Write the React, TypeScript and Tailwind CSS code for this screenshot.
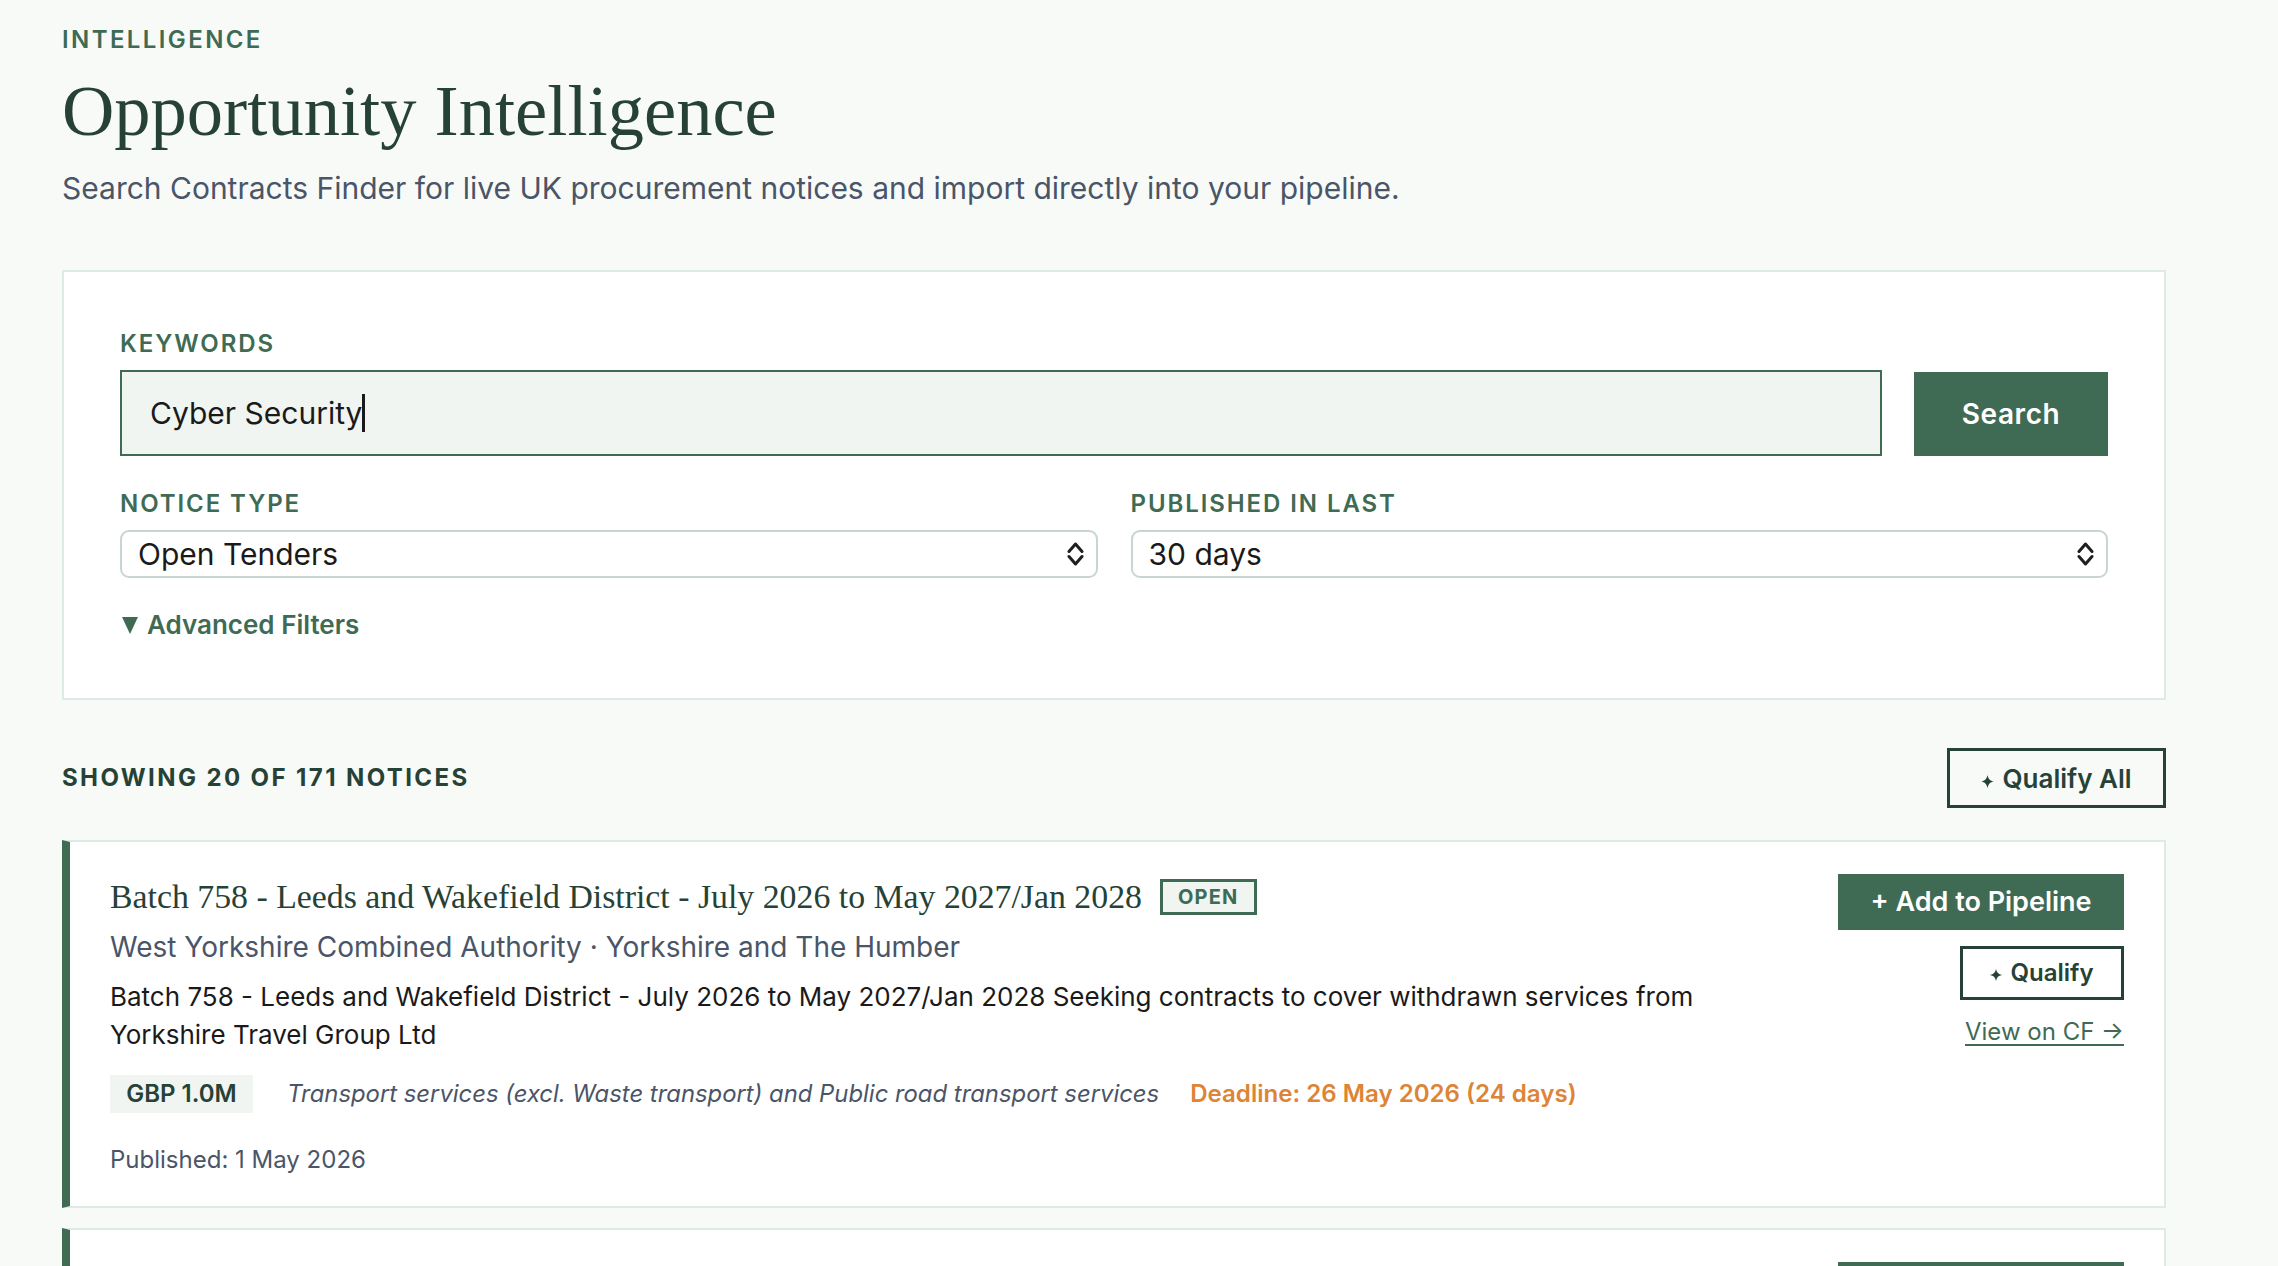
const serif = "font-['Liberation_Serif',serif]"

const Label = ({ children }: { children: string }) => (
  <div className="text-[24px] leading-[28px] font-semibold tracking-[0.08em] text-[#3f6b54]">{children}</div>
)

const Chevrons = () => (
  <svg width="17" height="24" viewBox="0 0 17 24" fill="none" stroke="#1f1f1f" strokeWidth="3" strokeLinecap="round" strokeLinejoin="round">
    <path d="M2 9.5 8.5 2 15 9.5" />
    <path d="M2 14.5 8.5 22 15 14.5" />
  </svg>
)

const Select = ({ value }: { value: string }) => (
  <div className="mt-[12px] h-[48px] rounded-[9px] border-2 border-[#c8d6cf] bg-white pl-[16px] pr-[12px] flex items-center justify-between">
    <span className="text-[30px] text-[#1a1a1a]">{value}</span>
    <Chevrons />
  </div>
)

const Sparkle = ({ size }: { size: number }) => (
  <svg width={size} height={size} viewBox="0 0 12 12" fill="#264237" className="inline-block mr-[8px] relative top-[1px]">
    <path d="M6 0C6.6 3.6 8.4 5.4 12 6 8.4 6.6 6.6 8.4 6 12 5.4 8.4 3.6 6.6 0 6 3.6 5.4 5.4 3.6 6 0Z" />
  </svg>
)

export default function App() {
  return (
    <div className="h-[1266px] overflow-hidden bg-[#f8faf8] font-['Inter',sans-serif] pl-[62px] pr-[112px] pt-[26px]">
      <div className="text-[24px] leading-[28px] font-semibold tracking-[0.1em] text-[#3f6b54]">INTELLIGENCE</div>
      <h1 className={`${serif} mt-[15px] text-[72.5px] leading-[84px] text-[#264237]`}>Opportunity Intelligence</h1>
      <p className="mt-[15px] text-[30px] leading-[40px] text-[#4a5568]">
        Search Contracts Finder for live UK procurement notices and import directly into your pipeline.
      </p>

      <section className="mt-[62px] h-[430px] border-2 border-[#dcebe4] bg-white pl-[56px] pr-[56px] pt-[58px]">
        <Label>KEYWORDS</Label>
        <div className="mt-[12px] flex items-end gap-[32px]">
          <div className="flex-1 h-[86px] border-2 border-[#3f6b54] bg-[#f0f5f2] pl-[28px] flex items-center">
            <span className="text-[30px] text-[#1a1a1a]">Cyber Security</span>
            <span className="w-[3px] h-[38px] bg-[#1a1a1a]" />
          </div>
          <button className="h-[84px] w-[194px] bg-[#3f6b54] text-white text-[28px] font-semibold tracking-[0.02em]">Search</button>
        </div>
        <div className="mt-[34px] grid grid-cols-2 gap-[33px]">
          <div>
            <Label>NOTICE TYPE</Label>
            <Select value="Open Tenders" />
          </div>
          <div>
            <Label>PUBLISHED IN LAST</Label>
            <Select value="30 days" />
          </div>
        </div>
        <div className="mt-[30px] flex items-center gap-[9px] text-[#3f6b54]">
          <svg width="16" height="17" viewBox="0 0 16 17" fill="#3f6b54" className="ml-[2px]">
            <path d="M0 0H16L8 17Z" />
          </svg>
          <span className="text-[26px] leading-[34px] font-semibold">Advanced Filters</span>
        </div>
      </section>

      <div className="mt-[48px] h-[60px] flex items-center justify-between">
        <h2 className="text-[24px] font-bold tracking-[0.1em] text-[#264237]">SHOWING 20 OF 171 NOTICES</h2>
        <button className="h-[60px] w-[219px] border-[3px] border-[#264237] text-[#264237] text-[26px] font-semibold">
          <Sparkle size={13} />Qualify All
        </button>
      </div>

      <article className="mt-[32px] h-[368px] border-2 border-l-[8px] border-[#dcebe4] border-l-[#3f6b54] bg-white pl-[40px] pr-[40px] pt-[32px] flex justify-between">
        <div className="pt-[1px]">
          <div className="flex items-center gap-[18px]">
            <h3 className={`${serif} text-[33.8px] leading-[44px] text-[#264237]`}>
              Batch 758 - Leeds and Wakefield District - July 2026 to May 2027/Jan 2028
            </h3>
            <span className="h-[36px] px-[15px] border-[3px] border-[#3f6b54] bg-[#f0f5f2] text-[20px] font-bold tracking-[0.06em] text-[#3f6b54] flex items-center">OPEN</span>
          </div>
          <p className="mt-[8px] text-[28px] leading-[40px] text-[#4a5568]">West Yorkshire Combined Authority · Yorkshire and The Humber</p>
          <p className="mt-[11px] w-[1620px] text-[26px] leading-[38px] text-[#1a1a1a]">
            Batch 758 - Leeds and Wakefield District - July 2026 to May 2027/Jan 2028 Seeking contracts to cover withdrawn services from Yorkshire Travel Group Ltd
          </p>
          <div className="mt-[21px] flex items-center">
            <span className="h-[38px] w-[143px] bg-[#f0f5f2] text-[24px] font-semibold text-[#264237] flex items-center justify-center">GBP 1.0M</span>
            <span className="ml-[34px] text-[23.85px] italic text-[#4a5568]">Transport services (excl. Waste transport) and Public road transport services</span>
            <span className="ml-[31px] text-[24.1px] font-semibold text-[#dd8436]">Deadline: 26 May 2026 (24 days)</span>
          </div>
          <p className="mt-[30px] text-[24px] leading-[34px] text-[#4a5568]">Published: 1 May 2026</p>
        </div>
        <div className="flex flex-col items-end shrink-0">
          <button className="h-[56px] w-[286px] bg-[#3f6b54] text-white text-[27px] font-semibold">+ Add to Pipeline</button>
          <button className="mt-[16px] h-[54px] w-[164px] border-[3px] border-[#264237] text-[#264237] text-[24px] font-semibold">
            <Sparkle size={12} />Qualify
          </button>
          <a className="mt-[17px] text-[24px] leading-[30px] text-[#3f6b54] underline underline-offset-4">View on CF →</a>
        </div>
      </article>

      {/* next notice only peeks in at the bottom of the window */}
      <article className="mt-[20px] h-[368px] border-2 border-l-[8px] border-[#dcebe4] border-l-[#3f6b54] bg-white pl-[40px] pr-[40px] pt-[32px] flex justify-end">
        <div className="h-[56px] w-[286px] bg-[#3f6b54]" />
      </article>
    </div>
  )
}
